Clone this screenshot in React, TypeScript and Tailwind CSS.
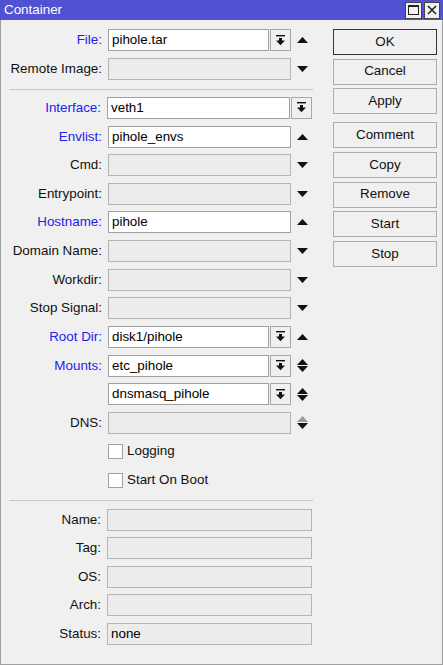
import React from "react";

type Kind = "combo" | "plain" | "plaincombo" | "wide";
type Arrow = "up" | "down" | "both" | "dns" | "none";

const font = { fontFamily: '"Liberation Sans", Arial, sans-serif' };

function DropIcon() {
  return (
    <svg width="9" height="11" viewBox="0 0 9 11">
      <rect x="0" y="0" width="9" height="1.4" fill="#111" />
      <rect x="3" y="3" width="3" height="3" fill="#111" />
      <polygon points="0,5.6 9,5.6 4.5,10.2" fill="#111" />
    </svg>
  );
}

function Tri({ dir, color = "#111" }: { dir: "up" | "down"; color?: string }) {
  return (
    <svg width="11" height="6" viewBox="0 0 11 6">
      {dir === "up" ? <polygon points="0,6 11,6 5.5,0" fill={color} /> : <polygon points="0,0 11,0 5.5,6" fill={color} />}
    </svg>
  );
}

function ArrowCell({ arrow }: { arrow: Arrow }) {
  return (
    <div className="flex w-[21px] flex-col items-center justify-center gap-[1px] pl-[1px]">
      {arrow === "up" && <Tri dir="up" />}
      {arrow === "down" && <Tri dir="down" />}
      {arrow === "both" && (<><Tri dir="up" /><Tri dir="down" /></>)}
      {arrow === "dns" && (<><Tri dir="up" color="#9a9a9a" /><Tri dir="down" /></>)}
    </div>
  );
}

function Field({ w, value, off }: { w: number; value?: string; off?: boolean }) {
  const on = value !== undefined && !off;
  return (
    <div
      className={
        "flex h-[22px] items-center border px-[3px] text-[13.4px] text-black " +
        (on ? "border-[#a0a0a0] bg-white" : "border-[#b4b4b4] bg-[#ececec]")
      }
      style={{ width: w }}
    >
      {value}
    </div>
  );
}

function DropBtn({ w }: { w: number }) {
  return (
    <div className="flex h-[22px] items-center justify-center border border-[#a8a8a8] bg-[#f0f0f0]" style={{ width: w }}>
      <DropIcon />
    </div>
  );
}

function Row({ label, blue, kind, value, arrow = "none", off }: { label: string; blue?: boolean; kind: Kind; value?: string; arrow?: Arrow; off?: boolean }) {
  return (
    <div className="flex h-[22px] items-center">
      <div className={"w-[101px] text-right text-[13.4px] " + (blue ? "text-[#2222f0]" : "text-[#111]")}>{label}</div>
      <div className="ml-[6px] flex items-center">
        {kind === "combo" && (<><Field w={161} value={value} /><div className="w-[1px]" /><DropBtn w={21} /></>)}
        {kind === "plaincombo" && (<><Field w={183} value={value} /><div className="w-[1px]" /><DropBtn w={21} /></>)}
        {kind === "plain" && <Field w={183} value={value} />}
        {kind === "wide" && <Field w={205} value={value} off={off} />}
        {arrow !== "none" && <ArrowCell arrow={arrow} />}
      </div>
    </div>
  );
}

function Check({ label }: { label: string }) {
  return (
    <div className="flex h-[22px] items-center pl-[107px]">
      <div className="h-[15px] w-[15px] border border-[#a0a0a0] bg-white" />
      <span className="ml-[4px] text-[13.4px] text-[#111]">{label}</span>
    </div>
  );
}

function Btn({ label, focus }: { label: string; focus?: boolean }) {
  return (
    <div
      className={
        "flex h-[26px] w-[104px] items-center justify-center border bg-[#f0f0f0] text-[13.4px] text-[#111] " +
        (focus ? "border-[#333]" : "border-[#adadad]")
      }
    >
      {label}
    </div>
  );
}

function Sep() {
  return <div className="ml-[8px] w-[304px] border-t border-[#c8c8c8]" />;
}

export default function App() {
  return (
    <div className="flex h-[665px] w-[443px] flex-col bg-[#f0f0f0]" style={font}>
      <div className="flex h-[20px] items-center justify-between bg-[#5151d3] pl-[4px] pr-[3px]">
        <span className="text-[13.4px] text-white">Container</span>
        <div className="flex gap-[2px]">
          <div className="flex h-[17px] w-[17px] items-center justify-center border border-[#444] bg-[#f0f0f0]">
            <div className="h-[10px] w-[11px] border border-t-2 border-[#222]" />
          </div>
          <div className="flex h-[17px] w-[16px] items-center justify-center border border-[#444] bg-[#f0f0f0]">
            <svg width="10" height="10" viewBox="0 0 10 10">
              <path d="M1 1 L9 9 M9 1 L1 9" stroke="#222" strokeWidth="1.6" />
            </svg>
          </div>
        </div>
      </div>
      <div className="flex flex-1 border-x border-b border-[#a0a0a0]">
        <div className="flex w-[311px] flex-col pt-[9px]">
          <div className="flex flex-col gap-[6.65px]">
            <Row label="File:" blue kind="combo" value="pihole.tar" arrow="up" />
            <Row label="Remote Image:" kind="plain" arrow="down" />
          </div>
          <div className="mt-[9px]"><Sep /></div>
          <div className="mt-[7.35px] flex flex-col gap-[6.64px]">
            <Row label="Interface:" blue kind="plaincombo" value="veth1" arrow="none" />
            <Row label="Envlist:" blue kind="plain" value="pihole_envs" arrow="up" />
            <Row label="Cmd:" kind="plain" arrow="down" />
            <Row label="Entrypoint:" kind="plain" arrow="down" />
            <Row label="Hostname:" blue kind="plain" value="pihole" arrow="up" />
            <Row label="Domain Name:" kind="plain" arrow="down" />
            <Row label="Workdir:" kind="plain" arrow="down" />
            <Row label="Stop Signal:" kind="plain" arrow="down" />
            <Row label="Root Dir:" blue kind="combo" value="disk1/pihole" arrow="up" />
            <Row label="Mounts:" blue kind="combo" value="etc_pihole" arrow="both" />
            <Row label="" kind="combo" value="dnsmasq_pihole" arrow="both" />
            <Row label="DNS:" kind="plain" arrow="dns" />
            <Check label="Logging" />
            <Check label="Start On Boot" />
          </div>
          <div className="mt-[8.7px]"><Sep /></div>
          <div className="mt-[8px] flex flex-col gap-[6.5px]">
            <Row label="Name:" kind="wide" />
            <Row label="Tag:" kind="wide" />
            <Row label="OS:" kind="wide" />
            <Row label="Arch:" kind="wide" />
            <Row label="Status:" kind="wide" value="none" off />
          </div>
        </div>
        <div className="ml-[21px] flex flex-col pt-[9px]">
          <div className="flex flex-col gap-[3.5px]">
            <Btn label="OK" focus />
            <Btn label="Cancel" />
            <Btn label="Apply" />
          </div>
          <div className="mt-[8px] flex flex-col gap-[3.75px]">
            <Btn label="Comment" />
            <Btn label="Copy" />
            <Btn label="Remove" />
            <Btn label="Start" />
            <Btn label="Stop" />
          </div>
        </div>
      </div>
    </div>
  );
}
